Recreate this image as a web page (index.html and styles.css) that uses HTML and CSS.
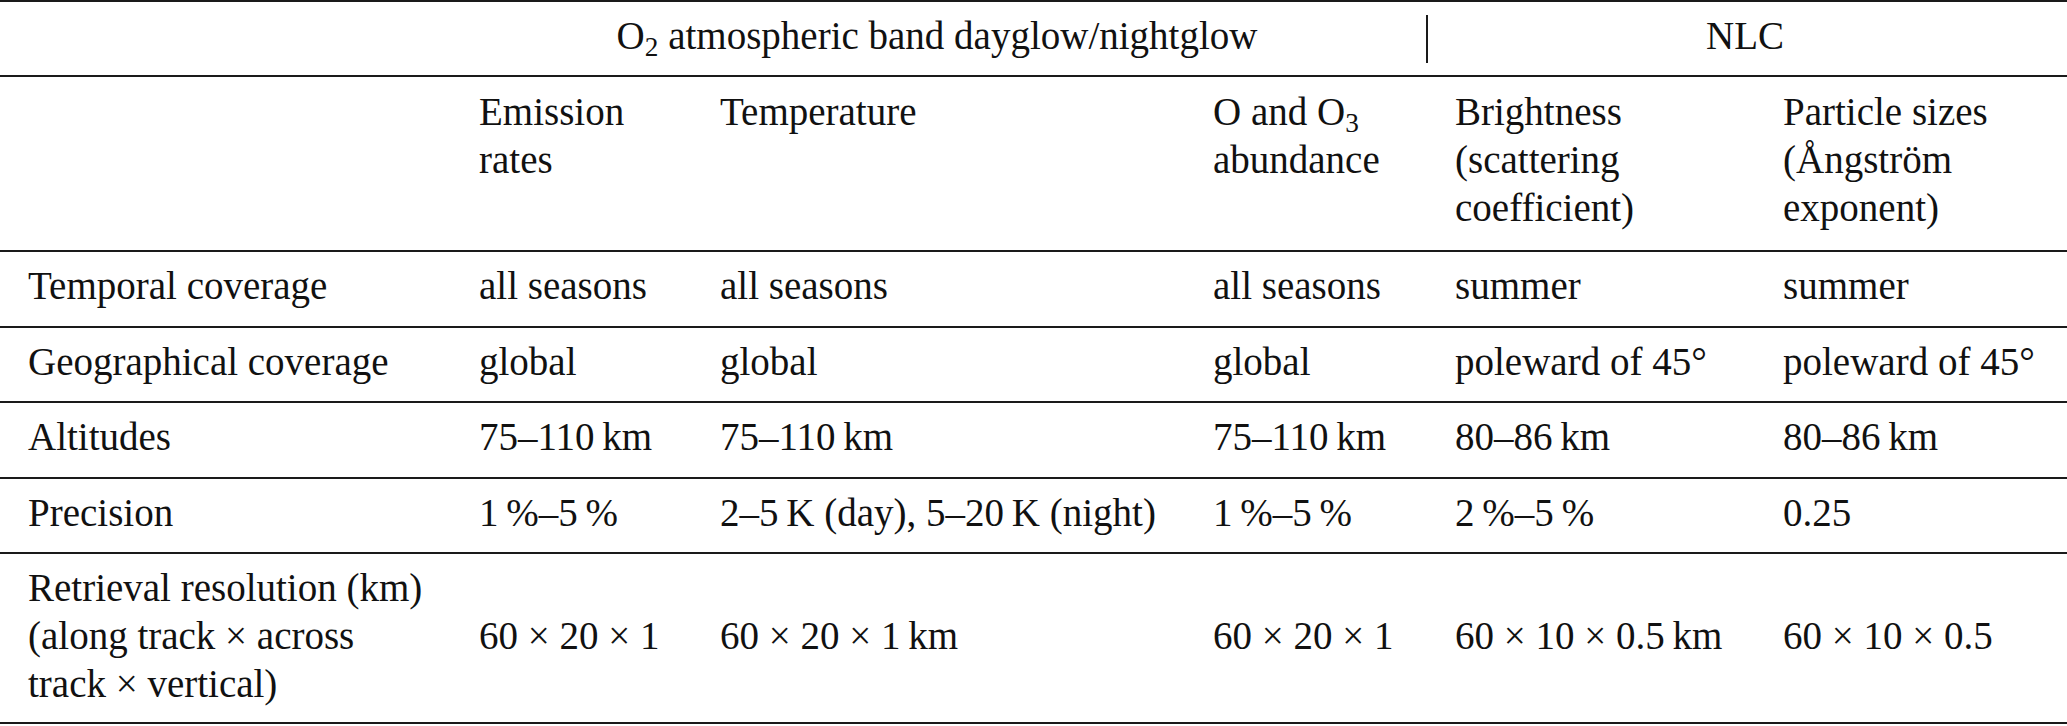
FILE: index.html
```html
<!DOCTYPE html>
<html lang="en">
<head>
    <meta charset="UTF-8">
    <meta name="viewport" content="width=device-width, initial-scale=1.0">
    <title>Retrieval products</title>
    <link rel="stylesheet" href="styles.css">
</head>
<body>
    <table class="products">
        <colgroup>
            <col class="w-label">
            <col class="w-emission">
            <col class="w-temp">
            <col class="w-abund">
            <col class="w-bright">
            <col class="w-particle">
        </colgroup>
        <thead>
            <tr class="group-row">
                <th></th>
                <th colspan="3" class="group-o2">O<sub>2</sub> atmospheric band dayglow/nightglow</th>
                <th colspan="2" class="group-nlc">NLC</th>
            </tr>
            <tr class="sub-row">
                <th></th>
                <th>Emission rates</th>
                <th>Temperature</th>
                <th>O and O<sub>3</sub> abundance</th>
                <th>Brightness (scattering coefficient)</th>
                <th>Particle sizes (Ångström exponent)</th>
            </tr>
        </thead>
        <tbody>
            <tr>
                <td>Temporal coverage</td>
                <td>all seasons</td>
                <td>all seasons</td>
                <td>all seasons</td>
                <td>summer</td>
                <td>summer</td>
            </tr>
            <tr>
                <td>Geographical coverage</td>
                <td>global</td>
                <td>global</td>
                <td>global</td>
                <td>poleward of 45°</td>
                <td>poleward of 45°</td>
            </tr>
            <tr>
                <td>Altitudes</td>
                <td>75–110&thinsp;km</td>
                <td>75–110&thinsp;km</td>
                <td>75–110&thinsp;km</td>
                <td>80–86&thinsp;km</td>
                <td>80–86&thinsp;km</td>
            </tr>
            <tr>
                <td>Precision</td>
                <td>1&thinsp;%–5&thinsp;%</td>
                <td>2–5&thinsp;K (day), 5–20&thinsp;K (night)</td>
                <td>1&thinsp;%–5&thinsp;%</td>
                <td>2&thinsp;%–5&thinsp;%</td>
                <td>0.25</td>
            </tr>
            <tr class="tall">
                <td>Retrieval resolution (km) (along track × across track × vertical)</td>
                <td>60 × 20 × 1</td>
                <td>60 × 20 × 1&thinsp;km</td>
                <td>60 × 20 × 1</td>
                <td>60 × 10 × 0.5&thinsp;km</td>
                <td>60 × 10 × 0.5</td>
            </tr>
        </tbody>
    </table>
</body>
</html>
```

FILE: styles.css
```css
* {
    margin: 0;
    padding: 0;
    box-sizing: border-box;
}

body {
    background: #ffffff;
    color: #111111;
    font-family: "Liberation Serif", "Times New Roman", serif;
    font-size: 39px;
}

.products {
    width: 2067px;
    border-collapse: collapse;
    table-layout: fixed;
    border-top: 2px solid #1a1a1a;
}

.w-label { width: 479px; }
.w-emission { width: 241px; }
.w-temp { width: 493px; }
.w-abund { width: 242px; }
.w-bright { width: 328px; }
.w-particle { width: 284px; }

.products th,
.products td {
    font-weight: normal;
    text-align: left;
    line-height: 48px;
    padding: 10px 0 15.5px 0;
    vertical-align: middle;
    border-bottom: 2px solid #1a1a1a;
}

sub {
    font-size: 0.7em;
    line-height: 0;
    vertical-align: -0.25em;
}

/* column paddings, they set where the text wraps */
.sub-row > :nth-child(1),
tbody td:nth-child(1) { padding-left: 28px; padding-right: 48px; }
.sub-row > :nth-child(2),
tbody td:nth-child(2) { padding-right: 41px; }
.sub-row > :nth-child(3),
tbody td:nth-child(3) { padding-right: 23px; }
.sub-row > :nth-child(4),
tbody td:nth-child(4) { padding-right: 42px; }
.sub-row > :nth-child(5),
tbody td:nth-child(5) { padding-right: 28px; }

.sub-row th {
    vertical-align: top;
    padding-top: 11px;
    padding-bottom: 18px;
}

.tall td {
    padding-bottom: 14px;
}

.group-row th {
    text-align: center;
    padding-bottom: 15px;
}

.group-o2 {
    padding-right: 60px !important;
}

.group-nlc {
    position: relative;
    padding-right: 32px !important;
}

.group-nlc::before {
    content: "";
    position: absolute;
    left: -29px;
    top: 13px;
    width: 2px;
    height: 48px;
    background: #1a1a1a;
}
```
